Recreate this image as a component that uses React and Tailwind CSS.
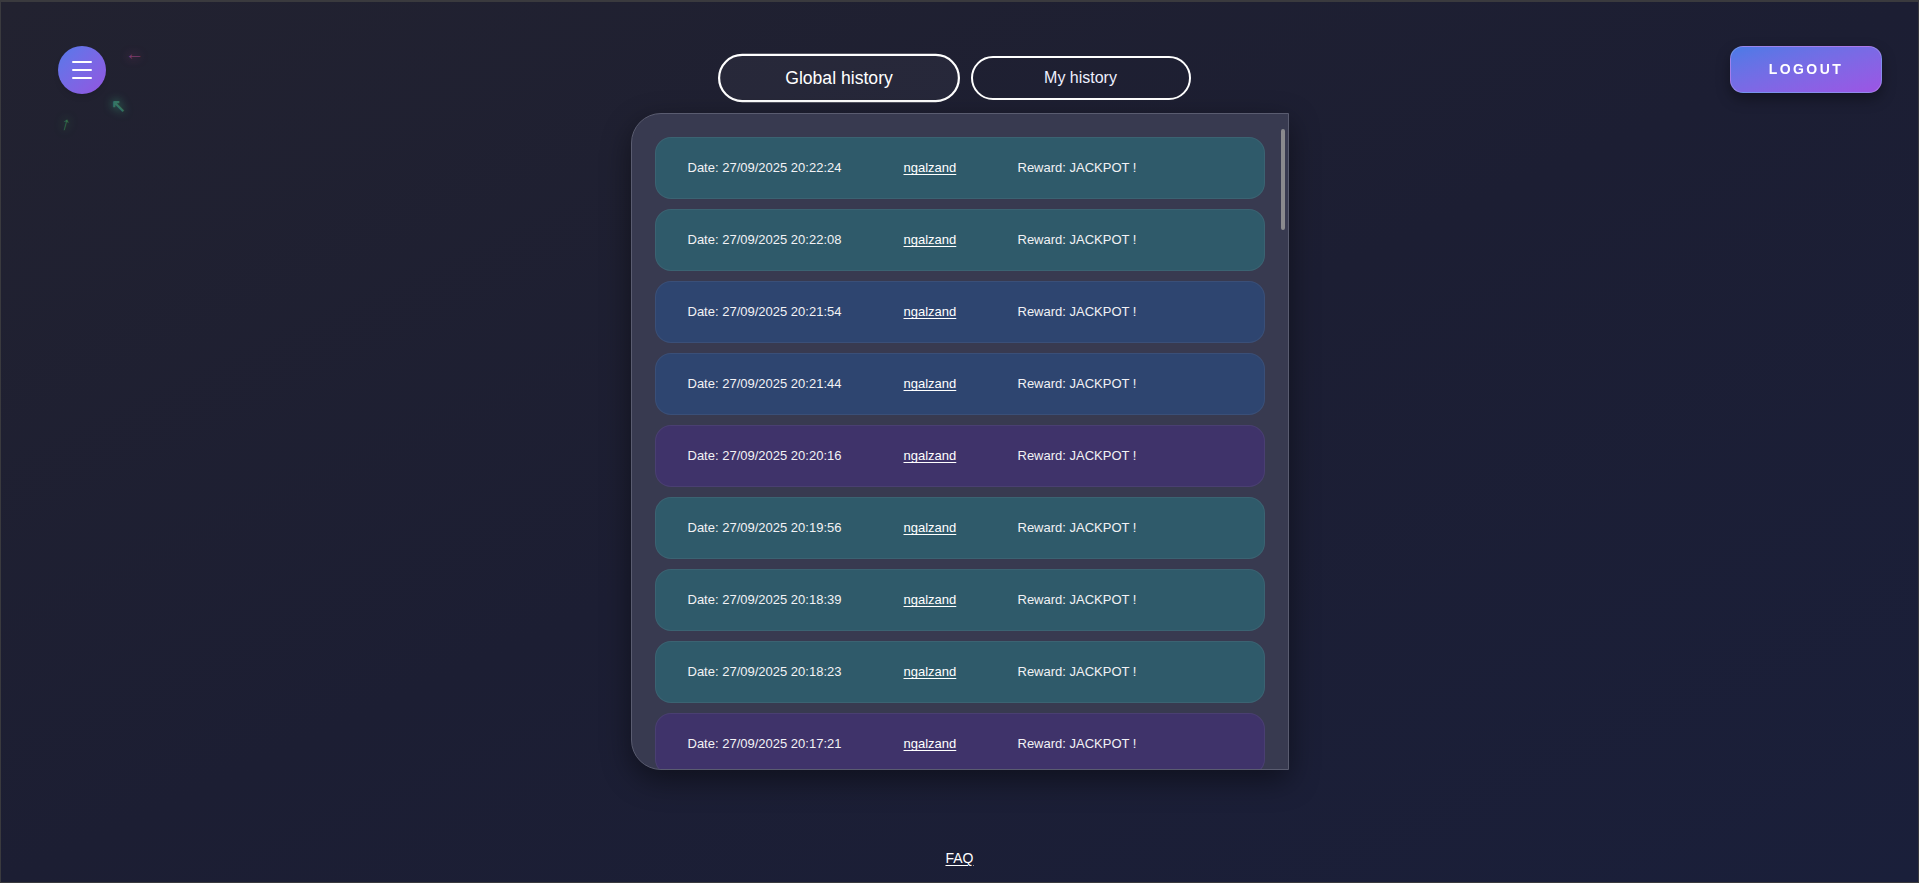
import React, { useState } from 'react'

const COLORS = {
  teal: 'bg-[#2f5a6a]',
  blue: 'bg-[#2e4570]',
  purple: 'bg-[#3f336a]',
}

const firstRows = [
  ['20:22:24', 'teal'],
  ['20:22:08', 'teal'],
  ['20:21:54', 'blue'],
  ['20:21:44', 'blue'],
  ['20:20:16', 'purple'],
  ['20:19:56', 'teal'],
  ['20:18:39', 'teal'],
  ['20:18:23', 'teal'],
  ['20:17:21', 'purple'],
]

const pad = (n) => String(n).padStart(2, '0')

// older entries, further down the list
const buildHistory = () => {
  const rows = firstRows.map(([time, color]) => ({ time, color }))
  const cycle = ['blue', 'teal', 'purple', 'teal', 'blue', 'teal', 'purple', 'blue', 'teal']
  let secs = 20 * 3600 + 17 * 60 + 21
  for (let i = 0; i < 12; i++) {
    secs -= 13 + ((i * 37) % 71)
    const h = Math.floor(secs / 3600)
    const m = Math.floor((secs % 3600) / 60)
    const s = secs % 60
    rows.push({ time: `${pad(h)}:${pad(m)}:${pad(s)}`, color: cycle[i % cycle.length] })
  }
  return rows
}

const history = buildHistory()

const HistoryRow = ({ time, color }) => (
  <div
    className={`${COLORS[color]} h-[62px] shrink-0 rounded-[16px] border border-white/[0.06] pl-8 grid grid-cols-[216px_114px_1fr] items-center text-[13px] text-[#f2f2f5]`}
  >
    <span>Date: 27/09/2025 {time}</span>
    <a href="#" className="underline underline-offset-2 text-white">ngalzand</a>
    <span>Reward: JACKPOT !</span>
  </div>
)

export default function App() {
  const [tab, setTab] = useState('global')

  return (
    <div
      className="relative h-[883px] w-full overflow-hidden border border-t-2 border-[#3a3a3e] bg-gradient-to-br from-[#222230] via-[#1c1e33] to-[#1a1f3a] text-white flex flex-col items-center"
      style={{ fontFamily: '"Liberation Sans", Arial, sans-serif' }}
    >
      {/* floating arrows */}
      <span className="absolute left-[124px] top-[38px] text-[19px] font-bold text-[#c8509d]/55 [text-shadow:0_0_10px_rgba(200,70,150,0.8)]">←</span>
      <span className="absolute left-[110px] top-[91px] text-[18px] font-bold text-[#46b08a]/50 [text-shadow:0_0_10px_rgba(60,180,130,0.8)]">↖</span>
      <span className="absolute left-[60px] top-[108px] text-[19px] font-bold rotate-[15deg] text-[#40a85e]/60 [text-shadow:0_0_10px_rgba(60,170,90,0.8)]">↑</span>

      {/* menu */}
      <button className="fixed left-[58px] top-[46px] w-12 h-12 rounded-full bg-gradient-to-br from-[#5379ea] to-[#9254e0] flex flex-col items-center justify-center gap-[6px] shadow-md">
        <span className="block w-[20px] h-[2px] bg-white rounded-sm" />
        <span className="block w-[20px] h-[2px] bg-white rounded-sm" />
        <span className="block w-[20px] h-[2px] bg-white rounded-sm" />
      </button>

      {/* logout */}
      <button className="fixed right-[37px] top-[46px] w-[152px] h-[47px] rounded-[13px] border border-white/20 bg-gradient-to-br from-[#4a7ae6] to-[#9c54e4] text-[14px] font-bold tracking-[2.4px] text-white shadow-[0_6px_14px_rgba(0,0,0,0.35)]">
        LOGOUT
      </button>

      {/* tabs */}
      <div className="mt-[54px] flex gap-[22px]">
        <button
          onClick={() => setTab('global')}
          className={`w-[220px] h-[44px] rounded-full border-2 border-white text-[16px] text-white transition-transform ${
            tab === 'global' ? 'scale-110 bg-white/[0.04]' : ''
          }`}
        >
          Global history
        </button>
        <button
          onClick={() => setTab('mine')}
          className={`w-[220px] h-[44px] rounded-full border-2 border-white text-[16px] text-[#eef0ff] transition-transform ${
            tab === 'mine' ? 'scale-110 bg-white/[0.04]' : ''
          }`}
        >
          My history
        </button>
      </div>

      {/* history list */}
      <div className="relative mt-[13px] w-[658px] h-[657px] shrink-0 rounded-l-[30px] border border-[#5a5c70] bg-[#383a50] shadow-[0_10px_30px_rgba(0,0,0,0.45)] overflow-hidden">
        <div className="h-full pt-[23px] px-[23px] flex flex-col gap-[10px]">
          {history.map((row, i) => (
            <HistoryRow key={i} time={row.time} color={row.color} />
          ))}
        </div>
        {/* scroll thumb */}
        <div className="absolute right-[3px] top-[15px] w-[4px] h-[101px] rounded-full bg-[#8a8a8e]" />
      </div>

      <a href="#" className="mt-auto mb-[13px] text-[14px] text-white underline underline-offset-2">
        FAQ
      </a>
    </div>
  )
}
